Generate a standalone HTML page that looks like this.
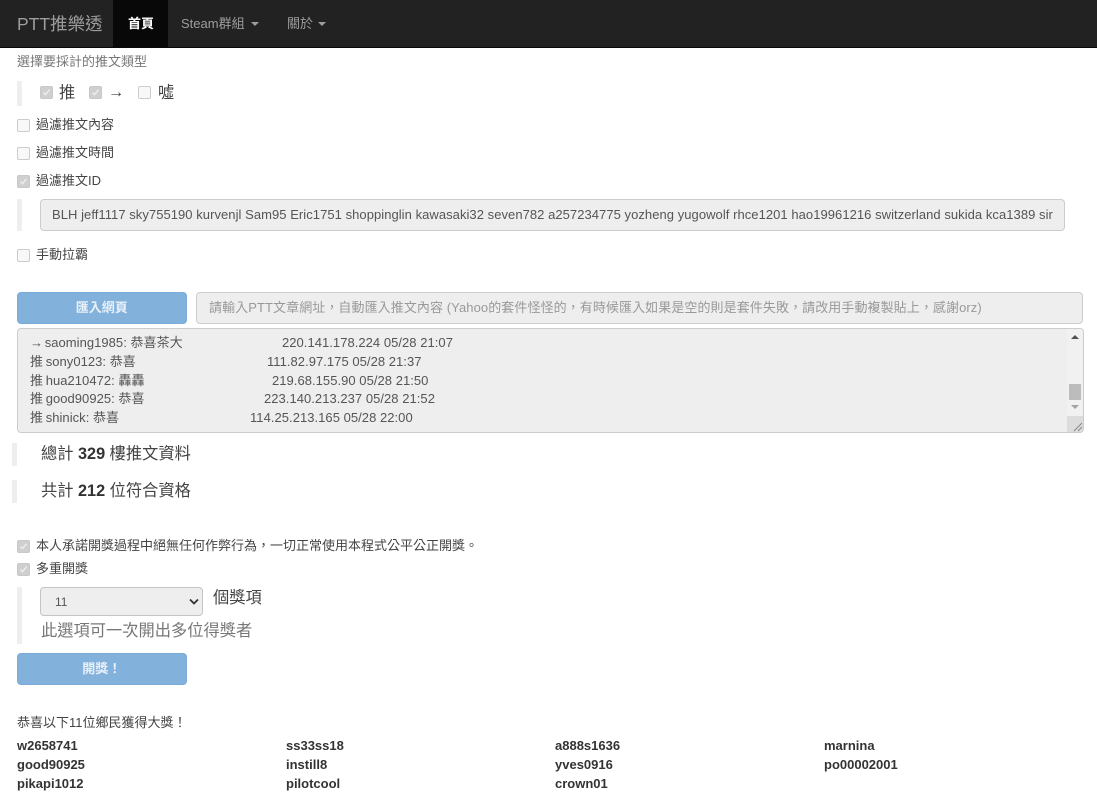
<!DOCTYPE html>
<html lang="zh-Hant"><head><meta charset="utf-8"><title>PTT推樂透</title>
<style>
html,body{margin:0;padding:0;background:#fff}
body{width:1097px;height:800px;position:relative;overflow:hidden;font-family:"Liberation Sans","Noto Sans CJK TC",sans-serif;font-size:13px;color:#444}
.a{position:absolute;white-space:pre;line-height:18px}
.nav{position:absolute;left:0;top:0;width:1097px;height:47px;background:#222;border-bottom:1px solid #080808}
.active{position:absolute;left:113px;top:0;width:55px;height:47px;background:#080808}
.bar{position:absolute;left:17px;width:5px;background:#eee}
.cb{position:absolute;width:13px;height:13px;box-sizing:border-box;border:1px solid #ccc;border-radius:2px;background:#f8f8f8}
.cb.on{background:#cfcfcf;border-color:#c8c8c8}
.cb.on svg{position:absolute;left:0;top:0}
.box{position:absolute;box-sizing:border-box;background:#eee;border:1px solid #ccc;border-radius:4px}
.btn{position:absolute;left:17px;width:169.5px;height:32px;box-sizing:border-box;background:#82b1dc;border:1px solid #7aaad8;border-radius:4px;color:#e8f0f8;text-align:center;line-height:29px;font-weight:bold}
.caret{position:absolute;width:0;height:0;border-left:4px solid transparent;border-right:4px solid transparent;border-top:4px solid #9d9d9d}
.lg{font-size:16.25px;line-height:22px}
b{color:#333}
.w{font-weight:bold;color:#333}
.t{color:#555;letter-spacing:.04px}
</style></head><body>
<div class="nav"></div><div class="active"></div>
<div class="a" style="left:17px;top:12px;font-size:17.5px;line-height:24px;color:#9d9d9d">PTT推樂透</div>
<div class="a" style="left:128px;top:15px;color:#fff;font-weight:bold">首頁</div>
<div class="a" style="left:181px;top:15px;color:#9d9d9d">Steam群組</div><div class="caret" style="left:251px;top:22px"></div>
<div class="a" style="left:287px;top:15px;color:#9d9d9d">關於</div><div class="caret" style="left:318px;top:22px"></div>

<div class="a" style="left:17px;top:53px;color:#777">選擇要採計的推文類型</div>
<div class="bar" style="top:81px;height:25px"></div>
<div class="cb on" style="left:40px;top:86px"><svg width="11" height="11"><path d="M2.5 5.5l2 2.2 4-5" fill="none" stroke="#eee" stroke-width="1.4"/></svg></div>
<div class="a lg" style="left:59px;top:82px">推</div>
<div class="cb on" style="left:89px;top:86px"><svg width="11" height="11"><path d="M2.5 5.5l2 2.2 4-5" fill="none" stroke="#eee" stroke-width="1.4"/></svg></div>
<div class="a lg" style="left:108px;top:81px">→</div>
<div class="cb" style="left:138px;top:86px"></div>
<div class="a lg" style="left:158px;top:82px">噓</div>

<div class="cb" style="left:17px;top:119px"></div><div class="a" style="left:36px;top:116px">過濾推文內容</div>
<div class="cb" style="left:17px;top:147px"></div><div class="a" style="left:36px;top:144px">過濾推文時間</div>
<div class="cb on" style="left:17px;top:175px"><svg width="11" height="11"><path d="M2.5 5.5l2 2.2 4-5" fill="none" stroke="#eee" stroke-width="1.4"/></svg></div><div class="a" style="left:36px;top:172px">過濾推文ID</div>

<div class="bar" style="top:199px;height:32px"></div>
<div class="box" style="left:40px;top:199px;width:1025px;height:32px;overflow:hidden"><div class="a" style="left:11px;top:6px;color:#555;letter-spacing:.05px">BLH jeff1117 sky755190 kurvenjl Sam95 Eric1751 shoppinglin kawasaki32 seven782 a257234775 yozheng yugowolf rhce1201 hao19961216 switzerland sukida kca1389 sir</div></div>

<div class="cb" style="left:17px;top:249px"></div><div class="a" style="left:36px;top:246px">手動拉霸</div>

<div class="btn" style="top:292px">匯入網頁</div>
<div class="box" style="left:196px;top:292px;width:887px;height:32px"><div class="a" style="left:12px;top:6px;color:#999;letter-spacing:.08px">請輸入PTT文章網址，自動匯入推文內容 (Yahoo的套件怪怪的，有時候匯入如果是空的則是套件失敗，請改用手動複製貼上，感謝orz)</div></div>

<div class="box" style="left:17px;top:328px;width:1067px;height:105px;overflow:hidden">
<div class="a t" style="left:12px;top:5px">→<span style="margin-left:-2px"> saoming1985: 恭喜茶大</span></div><div class="a t" style="left:264px;top:5px">220.141.178.224 05/28 21:07</div>
<div class="a t" style="left:12px;top:24px">推<span style="margin-left:-1px"> sony0123: 恭喜</span></div><div class="a t" style="left:249px;top:24px">111.82.97.175 05/28 21:37</div>
<div class="a t" style="left:12px;top:43px">推<span style="margin-left:-1px"> hua210472: 轟轟</span></div><div class="a t" style="left:254px;top:43px">219.68.155.90 05/28 21:50</div>
<div class="a t" style="left:12px;top:61px">推<span style="margin-left:-1px"> good90925: 恭喜</span></div><div class="a t" style="left:246px;top:61px">223.140.213.237 05/28 21:52</div>
<div class="a t" style="left:12px;top:80px">推<span style="margin-left:-1px"> shinick: 恭喜</span></div><div class="a t" style="left:232px;top:80px">114.25.213.165 05/28 22:00</div>
<div style="position:absolute;left:1049px;top:0;width:16px;height:103px;background:#f1f1f1"></div>
<div style="position:absolute;left:1051px;top:55px;width:12px;height:16px;background:#bcbcbc"></div>
<div style="position:absolute;left:1053px;top:6px;width:0;height:0;border-left:4px solid transparent;border-right:4px solid transparent;border-bottom:4px solid #505050"></div>
<div style="position:absolute;left:1053px;top:76px;width:0;height:0;border-left:4px solid transparent;border-right:4px solid transparent;border-top:4px solid #a3a3a3"></div>
<svg style="position:absolute;left:1049px;top:87px" width="16" height="16"><rect width="16" height="16" fill="#dcdcdc"/><path d="M7 15L15 7M11 15L15 11" stroke="#888" stroke-width="1"/></svg>
</div>

<div class="bar" style="left:12px;top:443px;height:23px"></div>
<div class="a lg" style="left:41px;top:443px">總計 <b>329</b> 樓推文資料</div>
<div class="bar" style="left:12px;top:480px;height:23px"></div>
<div class="a lg" style="left:41px;top:480px">共計 <b>212</b> 位符合資格</div>

<div class="cb on" style="left:17px;top:540px"><svg width="11" height="11"><path d="M2.5 5.5l2 2.2 4-5" fill="none" stroke="#eee" stroke-width="1.4"/></svg></div><div class="a" style="left:36px;top:537px">本人承諾開獎過程中絕無任何作弊行為，一切正常使用本程式公平公正開獎。</div>
<div class="cb on" style="left:17px;top:563px"><svg width="11" height="11"><path d="M2.5 5.5l2 2.2 4-5" fill="none" stroke="#eee" stroke-width="1.4"/></svg></div><div class="a" style="left:36px;top:560px">多重開獎</div>

<div class="bar" style="top:587px;height:57px"></div>
<div class="box" style="left:40px;top:587px;width:163px;height:29px;background:#eee;border-color:#c4c4c4"><div class="a" style="left:14px;top:5px;font-size:12px;color:#555">11</div>
<svg style="position:absolute;left:148px;top:10px" width="10" height="8"><path d="M1 1.5L5 5.5L9 1.5" fill="none" stroke="#333" stroke-width="1.8"/></svg></div>
<div class="a lg" style="left:213px;top:587px">個獎項</div>
<div class="a lg" style="left:41px;top:620px;color:#777">此選項可一次開出多位得獎者</div>

<div class="btn" style="top:653px">開獎！</div>

<div class="a" style="left:17px;top:714px">恭喜以下11位鄉民獲得大獎！</div>
<div class="a w" style="left:17px;top:737px">w2658741</div><div class="a w" style="left:286px;top:737px">ss33ss18</div><div class="a w" style="left:555px;top:737px">a888s1636</div><div class="a w" style="left:824px;top:737px">marnina</div>
<div class="a w" style="left:17px;top:756px">good90925</div><div class="a w" style="left:286px;top:756px">instill8</div><div class="a w" style="left:555px;top:756px">yves0916</div><div class="a w" style="left:824px;top:756px">po00002001</div>
<div class="a w" style="left:17px;top:775px">pikapi1012</div><div class="a w" style="left:286px;top:775px">pilotcool</div><div class="a w" style="left:555px;top:775px">crown01</div>
</body></html>
